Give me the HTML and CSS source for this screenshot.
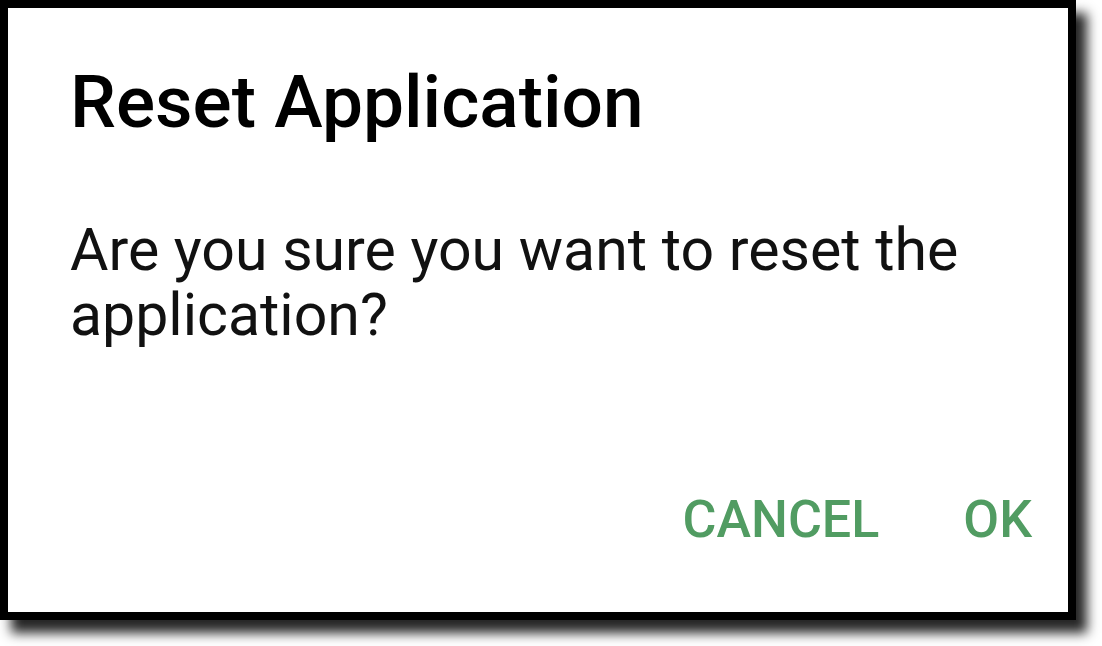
FILE: index.html
```html
<!DOCTYPE html>
<html lang="en">
<head>
    <meta charset="UTF-8">
    <meta name="viewport" content="width=device-width, initial-scale=1.0">
    <title>Reset Application</title>
    <link rel="stylesheet" href="styles.css">
</head>
<body>

    <div class="dialog">
        <h2 class="dialog-title">Reset Application</h2>
        <p class="dialog-message">Are you sure you want to reset the application?</p>
        <div class="dialog-actions">
            <button class="action-btn">CANCEL</button>
            <button class="action-btn">OK</button>
        </div>
    </div>

</body>
</html>
```

FILE: styles.css
```css
* {
    margin: 0;
    padding: 0;
    box-sizing: border-box;
}

body {
    font-family: Roboto, "Liberation Sans", sans-serif;
    background: #ffffff;
    width: 1102px;
    height: 646px;
    overflow: hidden;
}

.dialog {
    width: 1076px;
    height: 620px;
    background: #ffffff;
    border: 8px solid #000000;
    box-shadow: 11px 13px 11px rgba(0, 0, 0, 0.85);
    padding: 54px 36px 0 62px;
    display: flex;
    flex-direction: column;
}

.dialog-title {
    font-size: 73px;
    font-weight: 500;
    line-height: 80px;
    color: #000000;
}

.dialog-message {
    margin-top: 75px;
    font-size: 59px;
    line-height: 65px;
    color: #111111;
    padding-right: 40px;
}

.dialog-actions {
    margin-top: auto;
    margin-bottom: 62px;
    display: flex;
    justify-content: flex-end;
    gap: 84px;
}

.action-btn {
    background-color: transparent;
    border: none;
    font-family: inherit;
    font-size: 52px;
    font-weight: 500;
    color: #519c62;
    cursor: pointer;
}
```
